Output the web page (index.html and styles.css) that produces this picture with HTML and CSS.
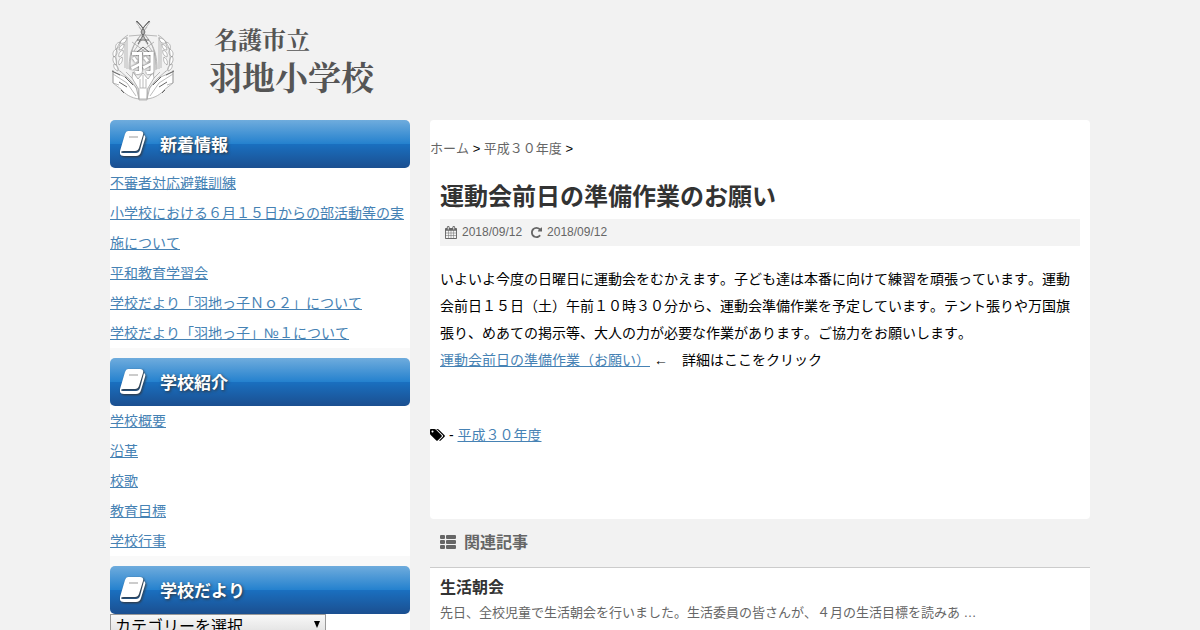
FILE: index.html
```html
<!DOCTYPE html>
<html lang="ja">
<head>
    <meta charset="UTF-8">
    <meta name="viewport" content="width=device-width, initial-scale=1.0">
    <title>運動会前日の準備作業のお願い</title>
    <link rel="stylesheet" href="styles.css">
</head>
<body>
    <!-- Shared icon shapes -->
    <svg class="icon-defs" aria-hidden="true">
        <symbol id="icon-book" viewBox="0 0 26 25">
            <path d="M8 0h12q4 0 3 4l-4 13q-1 3-4 3H4q-3 0-3 1 0 1 2 1h13q3 0 4-3l4-15q2 1 1 4l-4 13q-1 4-5 4H4q-5 0-4-5L5 3q1-3 3-3z"/>
            <path class="book-line" d="M9 6h9"/>
        </symbol>
    </svg>

    <div class="wrapper">
        <header class="header">
            <a class="logo" href="#">
                <svg class="crest" viewBox="0 0 66 84" aria-hidden="true">
                    <!-- crossed strands -->
                    <g id="strand">
                        <path class="crest-line" d="M40 4L27 22c-5 7-7 17-7 30M37 9L25 25c-4 7-6 15-6 26M19 18l12-1 11 16M15 20v30M17 19v32M22 24l11 8 7 6"/>
                        <path class="crest-dark" d="M26 3c4 3 7 7 9 11M27 3l6 7M31 14l7 12"/>
                    </g>
                    <use href="#strand" transform="translate(66 0) scale(-1 1)"/>
                    <path class="crest-dark" d="M26 35l7-6 7 6M27 22h12"/>
                    <!-- wheat ears -->
                    <g id="ear">
                        <path class="crest-fill" d="M17 20c-4 0-6 2-7 5 4 1 6-1 7-5zM10 24c-4 1-5 4-4 7 3-1 4-4 4-7zM14 26c-3 1-5 3-5 6 3 0 5-2 5-6zM6 31c-3 2-4 5-2 8 3-2 4-5 2-8zM13 32c-3 1-5 4-4 7 3-1 5-4 4-7zM4 38c-2 3-1 7 2 9 1-3 1-6-2-9zM12 39c-3 2-4 5-3 8 3-2 4-5 3-8zM4 46c-1 3 1 6 4 7 1-3-1-6-4-7z"/>
                        <path class="crest-line" d="M18 17C9 22 5 31 6 42s3 10 5 12"/>
                    </g>
                    <use href="#ear" transform="translate(66 0) scale(-1 1)"/>
                    <!-- wings -->
                    <g id="wing">
                        <path class="crest-fill" d="M3 54l15 6 8 9 3 12c-8-1-14-5-17-9L3 65z"/>
                        <path class="crest-line" d="M3 52v13l6 2M3 56l14 9 9 13M10 53l9 8 8 10M16 54l6 6 6 5"/>
                        <path class="crest-dark" d="M2 53l8 4M11 72l3 3M15 59l8 8M9 64l8 5"/>
                    </g>
                    <use href="#wing" transform="translate(66 0) scale(-1 1)"/>
                    <path class="crest-fill" d="M23 54l5 7 5-6 5 6 5-7 1 6-6 10-1 11h-8l-1-11-6-10z"/>
                    <path class="crest-line" d="M33 57v13M30 61v9h6v-9M29 70v12h8V70"/>
                    <text class="crest-text" x="33" y="54" text-anchor="middle">羽</text>
                </svg>
                <span class="logo-text">
                    <span class="logo-city">名護市立</span>
                    <span class="logo-school">羽地小学校</span>
                </span>
            </a>
        </header>

        <div class="columns">
            <aside class="sidebar">
                <section class="widget">
                    <h2 class="widget-title"><svg class="icon-book"><use href="#icon-book"/></svg>新着情報</h2>
                    <ul class="widget-list">
                        <li><a href="#">不審者対応避難訓練</a></li>
                        <li><a href="#">小学校における６月１５日からの部活動等の実施について</a></li>
                        <li><a href="#">平和教育学習会</a></li>
                        <li><a href="#">学校だより「羽地っ子Ｎｏ２」について</a></li>
                        <li><a href="#">学校だより「羽地っ子」№１について</a></li>
                    </ul>
                </section>
                <section class="widget">
                    <h2 class="widget-title"><svg class="icon-book"><use href="#icon-book"/></svg>学校紹介</h2>
                    <ul class="widget-list">
                        <li><a href="#">学校概要</a></li>
                        <li><a href="#">沿革</a></li>
                        <li><a href="#">校歌</a></li>
                        <li><a href="#">教育目標</a></li>
                        <li><a href="#">学校行事</a></li>
                    </ul>
                </section>
                <section class="widget">
                    <h2 class="widget-title"><svg class="icon-book"><use href="#icon-book"/></svg><label for="category">学校だより</label></h2>
                    <div class="widget-body">
                        <select id="category" class="category-select">
                            <option>カテゴリーを選択</option>
                        </select>
                    </div>
                </section>
            </aside>

            <main class="main">
                <article class="post">
                    <nav class="breadcrumb">
                        <a href="#">ホーム</a> &gt; <a href="#">平成３０年度</a> &gt;
                    </nav>
                    <div class="entry">
                        <h1 class="entry-title">運動会前日の準備作業のお願い</h1>
                        <div class="entry-date">
                            <svg class="icon-date" viewBox="0 0 1664 1792"><path d="M128 1664h288v-288h-288v288zm352 0h320v-288h-320v288zm-352-352h288v-320h-288v320zm352 0h320v-320h-320v320zm-352-384h288v-288h-288v288zm736 736h320v-288h-320v288zm-384-736h320v-288h-320v288zm768 736h288v-288h-288v288zm-384-352h320v-320h-320v320zm-352-864v-288q0-13-9.500-22.500t-22.500-9.500h-64q-13 0-22.500 9.500t-9.500 22.500v288q0 13 9.500 22.500t22.500 9.500h64q13 0 22.500-9.500t9.500-22.500zm736 864h288v-320h-288v320zm-384-384h320v-288h-320v288zm384 0h288v-288h-288v288zm32-480v-288q0-13-9.500-22.500t-22.500-9.500h-64q-13 0-22.500 9.500t-9.500 22.500v288q0 13 9.500 22.500t22.500 9.500h64q13 0 22.500-9.500t9.500-22.500zm384-64v1280q0 52-38 90t-90 38h-1408q-52 0-90-38t-38-90v-1280q0-52 38-90t90-38h128v-96q0-66 47-113t113-47h64q66 0 113 47t47 113v96h384v-96q0-66 47-113t113-47h64q66 0 113 47t47 113v96h128q52 0 90 38t38 90z"/></svg>
                            <time datetime="2018-09-12">2018/09/12</time>
                            <svg class="icon-repeat" viewBox="0 0 1536 1792"><path d="M1536 256v448q0 26-19 45t-45 19h-448q-42 0-59-40-17-39 14-69l138-138q-148-137-349-137-104 0-198.500 40.500t-163.500 109.500-109.500 163.500-40.500 198.500 40.500 198.500 109.500 163.500 163.500 109.500 198.500 40.500q119 0 225-52t179-147q7-10 23-12 15 0 25 9l137 138q9 8 9.500 20.500t-7.500 22.500q-109 132-264 204.500t-327 72.500q-156 0-298-61t-245-164-164-245-61-298 61-298 164-245 245-164 298-61q147 0 284.500 55.500t244.500 156.500l130-129q29-31 70-14 39 17 39 59z"/></svg>
                            <time datetime="2018-09-12">2018/09/12</time>
                        </div>
                        <p class="entry-text">いよいよ今度の日曜日に運動会をむかえます。子ども達は本番に向けて練習を頑張っています。運動会前日１５日（土）午前１０時３０分から、運動会準備作業を予定しています。テント張りや万国旗張り、めあての掲示等、大人の力が必要な作業があります。ご協力をお願いします。<br>
                        <a href="#">運動会前日の準備作業（お願い）</a> ←　詳細はここをクリック</p>
                    </div>
                    <p class="tags">
                        <svg class="icon-tags" viewBox="0 0 1920 1792"><path d="M448 448q0-53-37.500-90.500t-90.500-37.500-90.500 37.500-37.500 90.500 37.500 90.500 90.500 37.500 90.500-37.500 37.500-90.500zm1067 576q0 53-37 90l-491 492q-39 37-91 37-53 0-90-37l-715-716q-38-37-64.500-101t-26.500-117v-416q0-52 38-90t90-38h416q53 0 117 26.500t102 64.500l715 714q37 39 37 91zm384 0q0 53-37 90l-491 492q-39 37-91 37-36 0-59-14t-53-45l470-470q37-37 37-90 0-52-37-91l-715-714q-38-38-102-64.500t-117-26.500h224q53 0 117 26.500t102 64.500l715 714q37 39 37 91z"/></svg>
                        - <a href="#">平成３０年度</a>
                    </p>
                </article>

                <section class="related">
                    <h4 class="related-title">
                        <svg class="icon-list" viewBox="0 0 16 14"><path d="M1 0h3q1 0 1 1v2q0 1-1 1H1Q0 4 0 3V1q0-1 1-1zM7 0h8q1 0 1 1v2q0 1-1 1H7Q6 4 6 3V1q0-1 1-1zM1 5h3q1 0 1 1v2q0 1-1 1H1Q0 9 0 8V6q0-1 1-1zM7 5h8q1 0 1 1v2q0 1-1 1H7Q6 9 6 8V6q0-1 1-1zM1 10h3q1 0 1 1v2q0 1-1 1H1q-1 0-1-1v-2q0-1 1-1zM7 10h8q1 0 1 1v2q0 1-1 1H7q-1 0-1-1v-2q0-1 1-1z"/></svg>
                        関連記事
                    </h4>
                    <div class="related-item">
                        <h5><a href="#">生活朝会</a></h5>
                        <p>先日、全校児童で生活朝会を行いました。生活委員の皆さんが、４月の生活目標を読みあ …</p>
                    </div>
                </section>
            </main>
        </div>
    </div>
</body>
</html>
```
FILE: styles.css
```css
* {
    box-sizing: border-box;
    margin: 0;
    padding: 0;
}
body {
    font-family: "Liberation Sans", "Noto Sans CJK JP", sans-serif;
    font-size: 14px;
    line-height: 27px;
    font-kerning: none;
    color: #000;
    background-color: #f2f2f2;
    text-spacing-trim: space-all;
}
a {
    color: #4682b4;
}
ul {
    list-style: none;
}
svg {
    flex: none;
    fill: currentColor;
}
.icon-defs {
    display: none;
}
.wrapper {
    max-width: 980px;
    margin: 0 auto;
}

/* Header */
.header {
    padding: 18px 0;
}
.logo {
    display: flex;
    gap: 33px;
    height: 84px;
    color: #555;
    text-decoration: none;
}
.crest {
    width: 66px;
    height: 84px;
}
.crest-line,
.crest-dark {
    fill: none;
    stroke: #aaa;
    stroke-width: 0.8;
}
.crest-dark {
    stroke: #666;
    stroke-width: 1;
}
.crest-fill {
    fill: #fff;
    stroke: #999;
    stroke-width: 0.7;
}
.crest-text {
    font-family: "Noto Sans CJK JP", sans-serif;
    font-size: 25px;
    font-weight: bold;
    fill: #fff;
    filter: drop-shadow(0 0 1px #444);
}
.logo-text {
    display: flex;
    flex-direction: column;
    font-family: "Noto Serif CJK JP", "Liberation Serif", "Noto Sans CJK JP", serif;
    font-weight: bold;
}
.logo-city {
    padding-left: 5px;
    font-size: 24px;
    line-height: 41px;
}
.logo-school {
    font-size: 33px;
    line-height: 34px;
}

/* Columns */
.columns {
    display: flex;
    align-items: flex-start;
    gap: 20px;
}
.sidebar {
    flex: none;
    width: 300px;
    background-color: #f9f9f9;
}
.main {
    flex: 1;
    min-width: 0;
}

/* Sidebar */
.widget {
    margin-bottom: 10px;
}
.widget-title {
    display: flex;
    align-items: center;
    gap: 14px;
    height: 48px;
    padding: 2px 10px 0;
    border-radius: 5px;
    font-size: 17px;
    color: #fff;
    text-shadow: 1px 1px 3px #333;
    background: linear-gradient(to bottom, #6facdd 0%, #2481ce 50%, #1a6fbf 51%, #1b4f90 100%);
}
.icon-book {
    width: 26px;
    height: 25px;
    margin-top: -3px;
    filter: drop-shadow(1px 1px 1px #333);
}
.book-line {
    fill: none;
    stroke: #999;
    stroke-width: 1;
}
.widget-list {
    line-height: 30px;
    background-color: #fff;
}
.widget-body {
    background-color: #fff;
}
.category-select {
    display: block;
    width: 216px;
    height: 24px;
    padding: 0 4px;
    appearance: none;
    border: 1px solid #999;
    border-radius: 0;
    font-family: inherit;
    font-size: 16px;
    color: #000;
    background: url("data:image/svg+xml,%3Csvg xmlns='http://www.w3.org/2000/svg' width='8' height='7'%3E%3Cpath d='M1 0h6L4 7z'/%3E%3C/svg%3E") no-repeat right 4px top 6px, linear-gradient(#f8f8f8, #ddd);
}

/* Post */
.post {
    padding: 15px 0 70px;
    border-radius: 4px;
    background-color: #fff;
}
.breadcrumb {
    font-size: 13px;
}
.breadcrumb a {
    color: #666;
    text-decoration: none;
}
.entry {
    padding: 17px 10px 48px;
}
.entry-title {
    margin-bottom: 5px;
    font-size: 24px;
    line-height: 35px;
    color: #333;
}
.entry-date {
    display: flex;
    align-items: center;
    gap: 5px;
    margin-bottom: 20px;
    padding: 0 5px;
    font-size: 12px;
    color: #666;
    background-color: #f3f3f3;
}
.icon-date {
    width: 12px;
    height: 13px;
}
.icon-repeat {
    width: 11px;
    height: 13px;
    margin-left: 4px;
}
.icon-tags {
    width: 15px;
    height: 14px;
    vertical-align: -2px;
}

/* Related posts */
.related-title {
    display: flex;
    align-items: center;
    gap: 8px;
    height: 49px;
    padding: 0 10px 2px;
    border-bottom: 1px solid #ccc;
    font-size: 16px;
    color: #666;
}
.icon-list {
    width: 16px;
    height: 14px;
}
.related-item {
    padding: 7px 10px 20px;
    background-color: #fff;
}
.related-item h5 {
    font-size: 16px;
    line-height: 26px;
}
.related-item h5 a {
    color: #333;
    text-decoration: none;
}
.related-item p {
    font-size: 13px;
    line-height: 24px;
    color: #666;
}
```
